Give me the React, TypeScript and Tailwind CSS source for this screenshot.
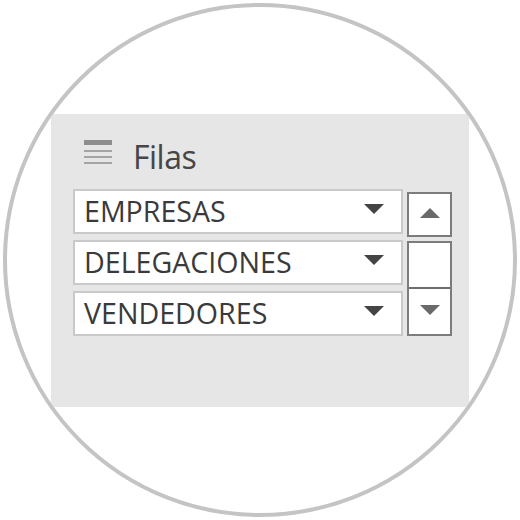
import React from 'react';

const fields = ['EMPRESAS', 'DELEGACIONES', 'VENDEDORES'];

const Caret = ({ up = false, color }: { up?: boolean; color: string }) => (
  <svg width="20" height="10" viewBox="0 0 20 10" className="block">
    <path d={up ? 'M0 10 L10 0 L20 10 Z' : 'M0 0 L20 0 L10 10 Z'} fill={color} />
  </svg>
);

const RowsIcon = () => (
  <svg width="28" height="25" viewBox="0 0 28 25" className="block">
    <rect x="0" y="0" width="28" height="5" fill="#8e8e8e" />
    <rect x="0" y="10" width="28" height="2" fill="#a4a4a4" />
    <rect x="0" y="16" width="28" height="2" fill="#a4a4a4" />
    <rect x="0" y="22" width="28" height="2" fill="#a4a4a4" />
  </svg>
);

export default function App() {
  return (
    <div className="w-[520px] h-[520px] bg-white p-[3px]">
      <div className="w-[514px] h-[514px] rounded-full border-4 border-[#c4c4c4] overflow-hidden flex items-center justify-center">
        <div className="w-[418px] h-[293px] bg-[#e6e6e6] pl-[22px] pt-[26px] font-['Open_Sans',sans-serif]">
          <div className="h-[49px] flex items-start">
            <div className="ml-[11px]">
              <RowsIcon />
            </div>
            <span className="ml-[21px] text-[32px] leading-[33px] tracking-[-0.5px] text-[#464646]">Filas</span>
          </div>

          <div className="flex gap-[4px]">
            <div className="flex flex-col gap-[6px] w-[330px]">
              {fields.map((f) => (
                <div
                  key={f}
                  className="h-[45px] bg-white border-2 border-[#c9c9c9] flex items-center justify-between pl-[9px] pr-[17px]"
                >
                  <span className="text-[28.6px] leading-none text-[#3a3a3a]">{f}</span>
                  <div className="-mt-[4px]">
                    <Caret color="#444444" />
                  </div>
                </div>
              ))}
            </div>

            <div className="w-[45px] flex flex-col gap-[4px] pt-[3px]">
              <div className="h-[45px] bg-white border-2 border-[#7c7c7c] flex items-center justify-center">
                <div className="-mt-[2px]">
                  <Caret up color="#6a6a6a" />
                </div>
              </div>
              <div className="h-[95px] bg-white border-2 border-[#7c7c7c] flex flex-col">
                <div className="flex-1 border-b-2 border-[#6e6e6e]" />
                <div className="h-[45px] flex items-center justify-center">
                  <div className="mt-[-2px]">
                    <Caret color="#6a6a6a" />
                  </div>
                </div>
              </div>
            </div>
          </div>
        </div>
      </div>
    </div>
  );
}
